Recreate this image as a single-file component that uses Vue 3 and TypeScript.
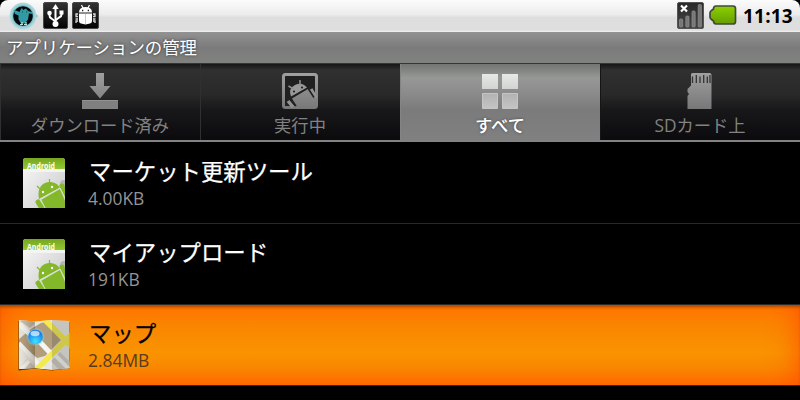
<template>
  <div class="screen">
    <header class="status-bar">
      <svg class="status-icon" width="30" height="28" viewBox="0 0 30 28">
        <defs>
          <radialGradient id="ring"><stop offset=".6" stop-color="#4298a1" /><stop offset=".85" stop-color="#9ed3da" /><stop offset="1" stop-color="#bdd9dc" /></radialGradient>
        </defs>
        <path d="M24 9l5 5-5 5z" fill="#72bdc7" />
        <circle cx="14" cy="14" r="13.5" fill="url(#ring)" />
        <circle cx="14" cy="14" r="9.8" fill="#02080a" />
        <path d="M4.500 8l4 1 2 1 1.500-3 1-1 1 2 3-1.500 2 2.500 4 1 1 2-4-.5-1 6-3 4h-4l-2.500-4v-4L6 12z" fill="#319aa5" />
        <path d="M13 10h1M17 10h1" stroke="#123f46" fill="none" />
        <path d="M11 22.500h3M15 22.500h3M13 20v2M17 20v2" stroke="#c8e0dc" stroke-width="1.200" />
      </svg>
      <svg class="status-icon" width="25" height="27" viewBox="0 0 25 27">
        <rect x=".5" y=".5" width="24" height="26" rx="1.5" fill="url(#dark)" stroke="#484848" />
        <g stroke="#fff" stroke-width="2" fill="none">
          <path d="M12.5 6v17" />
          <path d="M6.500 10v3.500q0 2 2 3l4 3M18.500 9v3.500q0 2-2 2.700l-4 3" />
        </g>
        <path d="M12.5 2l3.2 5H9.3zM16.5 8.500h4v4h-4z" fill="#fff" />
        <circle cx="6.5" cy="11" r="2.3" fill="#fff" />
        <circle cx="12.5" cy="22" r="3" fill="#fff" />
      </svg>
      <svg class="status-icon" width="27" height="27" viewBox="0 0 27 27">
        <defs>
          <linearGradient id="dark" x2="0" y2="1"><stop stop-color="#333" /><stop offset="1" stop-color="#020202" /></linearGradient>
        </defs>
        <rect x=".5" y=".5" width="26" height="26" rx="1.5" fill="url(#dark)" stroke="#484848" />
        <path d="M7 10.500q0-5.500 6.500-5.500T20 10.500z" fill="#fff" />
        <path d="M9.500 3l1.500 3M17.500 3L16 6" stroke="#fff" stroke-width="1.200" />
        <path d="M7 11.500h13V19q0 2-2 2.500l-4.500 1-4.500-1Q7 21 7 19z" fill="#fff" />
        <path d="M13.500 12v10" stroke="#bbb" stroke-width=".8" />
        <path d="M6 12H4v2.500h2M3.500 17H6M4 21v-2h2M21 12h2v2.500h-2M23.500 17H21M23 21v-2h-2" stroke="#ddd" stroke-width="1.300" fill="none" />
        <path d="M10 8.500h1.300M15.700 8.500H17" stroke="#222" stroke-width="1.300" />
      </svg>
      <div class="spacer"></div>
      <svg width="27" height="27" viewBox="0 0 27 27">
        <defs>
          <linearGradient id="dark2" x2="0" y2="1"><stop stop-color="#292929" /><stop offset="1" stop-color="#444" /></linearGradient>
        </defs>
        <rect x=".5" y=".5" width="26" height="26" rx="1.5" fill="url(#dark2)" stroke="#555" />
        <g fill="#777" stroke="#919191" stroke-width=".7">
          <rect x="2.5" y="17" width="3.2" height="8" rx="1" />
          <rect x="8.8" y="14" width="3.2" height="11" rx="1" />
          <rect x="15" y="9" width="3.2" height="16" rx="1" />
          <rect x="21.2" y="2.5" width="3.2" height="22.5" rx="1" />
        </g>
        <path d="M4 3.500l6 6M10 3.500l-6 6" stroke="#fff" stroke-width="2.2" />
      </svg>
      <svg class="battery" width="28" height="21" viewBox="0 0 28 21">
        <defs>
          <linearGradient id="bat" x2="0" y2="1"><stop stop-color="#8ed000" /><stop offset="1" stop-color="#669d00" /></linearGradient>
        </defs>
        <path d="M7 1h17q2.500 0 2.500 2.500v13q0 2.500-2.500 2.500H7q-2.500 0-2.500-3l-2-1.500Q1 13.500 1 12V8q0-1.500 1.500-2.500l2-1.500Q4.500 1 7 1z" fill="url(#bat)" stroke="#414839" stroke-width="1.700" />
      </svg>
      <span class="clock">11:13</span>
    </header>

    <div class="title-bar">アプリケーションの管理</div>

    <nav class="tabs">
      <div v-for="tab in tabs" :key="tab.id" class="tab" :class="{ active: tab.id === current }">
        <svg class="tab-icon" width="36" height="36" viewBox="0 0 36 36">
          <defs>
            <linearGradient id="gray" gradientUnits="userSpaceOnUse" x1="0" y1="0" x2="0" y2="36"><stop stop-color="#a0a0a0" /><stop offset="1" stop-color="#777" /></linearGradient>
            <linearGradient id="light" x2="0" y2="1"><stop stop-color="#e7e9e7" /><stop offset="1" stop-color="#d2d4d2" /></linearGradient>
            <linearGradient id="mid" x2="0" y2="1"><stop stop-color="#b2b2b2" /><stop offset="1" stop-color="#c4c4c4" /></linearGradient>
          </defs>
          <template v-if="tab.id === 'download'">
            <path d="M14 0h8v13h6.500L18 25.500 7.500 13H14z" fill="url(#gray)" />
            <path d="M0 27h36v9H0z" fill="#808080" />
            <path d="M0 27.500h36" stroke="#929292" />
          </template>
          <template v-else-if="tab.id === 'running'">
            <rect x="1.500" y="1.500" width="33" height="33" rx="2" fill="#202020" stroke="url(#gray)" stroke-width="3" />
            <path d="M9 23.500Q6 15.500 13 12T25 14.500z" fill="#999" />
            <path d="M6.500 13l5 3M18 7v6" stroke="#929292" stroke-width="1.500" />
            <path d="M10 25.500L26 16l7 10v8H14z" fill="url(#gray)" />
            <path d="M29 16l5 9M6 28l5 6" stroke="#919191" stroke-width="3.500" />
            <path d="M26.500 16l5.500 8.500M9 26l5 7" stroke="#222" stroke-width="1.600" />
            <circle cx="12" cy="18.500" r="1.100" fill="#222" /><circle cx="20" cy="14.500" r="1.100" fill="#222" />
          </template>
          <template v-else-if="tab.id === 'all'">
            <path d="M0 1h16v15H0zM20 1h16v15H20z" fill="url(#light)" />
            <path d="M.5 20.500h15v15H.5zM20.500 20.500h15v15h-15z" fill="url(#mid)" stroke="#c5c5c5" />
          </template>
          <template v-else>
            <path d="M9 1.500Q9 0 10.500 0h17Q29.500 0 29.500 2v34h-24V23l1.500-2-1.500-2v-3L9 12.500z" fill="url(#gray)" />
            <path d="M10.500 3.500V10M14.300 2v8M18 3.500V10M21.700 2v8M25.300 3.500V10M28 2v8" stroke="#333" stroke-width="1.300" />
          </template>
        </svg>
        <span class="tab-label">{{ tab.label }}</span>
      </div>
    </nav>

    <div class="list">
      <div v-for="app in apps" :key="app.name" class="row" :class="{ selected: app.icon === 'map' }">
        <svg v-if="app.icon === 'android'" class="app-icon" width="54" height="54" viewBox="0 0 54 54">
          <defs>
            <linearGradient id="paper" x2="1" y2="1"><stop stop-color="#fafafa" /><stop offset="1" stop-color="#c8c8c8" /></linearGradient>
            <linearGradient id="cap" x2="0" y2="1"><stop stop-color="#76a51f" /><stop offset="1" stop-color="#91c833" /></linearGradient>
            <clipPath id="sheet"><path d="M6 5q0-3 3-3h36q3 0 3 3v47H6z" /></clipPath>
          </defs>
          <g clip-path="url(#sheet)">
            <path d="M6 2h42v50H6z" fill="url(#paper)" />
            <path d="M6 2h42v11H6z" fill="url(#cap)" />
            <text x="10" y="13" class="icon-text" textLength="28" lengthAdjust="spacingAndGlyphs">Android</text>
            <path d="M6 13h42v3H6z" fill="#f4f4f4" />
            <circle cx="47" cy="28" r="4" fill="#b5b5b5" />
            <path d="M22 43C18 24 38 22 43 32z" fill="#84b82b" />
            <path d="M20 30l5 5M32.500 23v6" stroke="#84b82b" stroke-width="1.200" />
            <path d="M24 44l19-11 8 19H27z" fill="#84b82b" />
            <path d="M21 46l5 8M45 30l7 15" stroke="#84b82b" stroke-width="5" stroke-linecap="round" />
            <path d="M23 43l20-11 5 10M24 44l4 8" stroke="#dce3d0" stroke-width="1" fill="none" />
            <circle cx="26" cy="36" r="1.200" fill="#fff" /><circle cx="35" cy="31" r="1.200" fill="#fff" />
          </g>
        </svg>
        <svg v-else class="app-icon" width="54" height="54" viewBox="0 0 54 54">
          <defs>
            <clipPath id="fold"><path d="M2 2l16 1.500L35 2l17.500 1v47L35 52l-17-2-16 1z" /></clipPath>
            <radialGradient id="pin" cx=".5" cy=".8" r=".7"><stop stop-color="#3fe4ff" /><stop offset="1" stop-color="#1675e8" /></radialGradient>
            <radialGradient id="halo"><stop offset=".5" stop-color="#79dfff" /><stop offset="1" stop-color="#79dfff" stop-opacity="0" /></radialGradient>
            <linearGradient id="shade"><stop stop-color="#fff" stop-opacity=".15" /><stop offset="1" stop-color="#4a3a20" stop-opacity=".3" /></linearGradient>
          </defs>
          <path d="M1.500 3l16.500 2 17-2 18 1v46l-18 2.500-17-2L1.500 52.500z" fill="#5d3508" />
          <g clip-path="url(#fold)">
            <path d="M0 0h54v54H0z" fill="#e4e2dc" />
            <path d="M3 3l7-3 8 5-5 5z" fill="#bfb5a2" />
            <path d="M2 21l12-10 10-6 4-1L44 22 28 38 20 40 2 24z" fill="#a8906a" />
            <path d="M43 22l4-3-12-14-7-2z" fill="#b7a17a" />
            <path d="M0 54l10-13 8 8-3 5zM34 43l9-9 11 11v9H44z" fill="#c9c4b8" />
            <path d="M2 25l24 26M36 35l18 18M2 54l10-11" stroke="#f2f2ee" stroke-width="4" />
            <path d="M2 6l14 13M22 23l15 16" stroke="#f4f4f0" stroke-width="5" />
            <path d="M26 0l29 29M18 53l37-37" stroke="#f2e73a" stroke-width="5.500" />
            <path d="M1 0h17v54H1z" fill="url(#shade)" />
            <path d="M18 0h17v54H18z" fill="#fff" opacity=".12" />
            <path d="M35 0h18v54H35z" fill="#777" opacity=".28" />
          </g>
          <circle cx="18.500" cy="19" r="9.500" fill="url(#halo)" />
          <circle cx="18.500" cy="19" r="7.300" fill="url(#pin)" />
          <ellipse cx="18" cy="15.500" rx="4.500" ry="2.700" fill="#e0f4ff" opacity=".75" />
        </svg>
        <div class="info">
          <div class="name">{{ app.name }}</div>
          <div class="size">{{ app.size }}</div>
        </div>
      </div>
    </div>
  </div>
</template>

<script lang="ts" setup>
import { ref } from "vue";

interface Tab {
  id: string
  label: string
}

interface App {
  name: string
  size: string
  icon: string
}

const current = ref("all")

const tabs: Tab[] = [
  { id: "download", label: "ダウンロード済み" },
  { id: "running", label: "実行中" },
  { id: "all", label: "すべて" },
  { id: "sd", label: "SDカード上" },
]

const apps: App[] = [
  { name: "マーケット更新ツール", size: "4.00KB", icon: "android" },
  { name: "マイアップロード", size: "191KB", icon: "android" },
  { name: "マップ", size: "2.84MB", icon: "map" },
]
</script>

<style>
body {
  background: #000;
}
</style>

<style scoped>
.screen {
  width: 800px;
  height: 400px;
  overflow: hidden;
  background: #000;
  font-family: "Open Sans", "Noto Sans CJK JP", sans-serif;
}
.status-bar {
  display: flex;
  align-items: flex-start;
  box-sizing: border-box;
  height: 32px;
  padding: 2px 7px 0 9px;
  border-radius: 8px 8px 0 0;
  background: linear-gradient(#fbfbfb, #ececec 45%, #dedede 55%, #dedede 94%, #f4f4f4);
}
.status-icon {
  margin-right: 4px;
}
.battery {
  margin: 3px 0 0 5px;
}
.spacer {
  flex: 1;
}
.clock {
  width: 50px;
  margin-left: 6px;
  color: #000;
  font-size: 19px;
  font-weight: 700;
  line-height: 28px;
  letter-spacing: 0.2px;
  white-space: nowrap;
}
.title-bar {
  height: 31px;
  padding-left: 6px;
  background: linear-gradient(#929292, #7b7b7b 50%, #808280);
  color: #fff;
  font-size: 17.4px;
  line-height: 30px;
  text-shadow: 0 0 3px #333;
}
.tabs {
  display: flex;
  height: 76px;
  border-top: 1px solid #353535;
  border-bottom: 2px solid #828282;
}
.tab {
  display: flex;
  flex: 1;
  flex-direction: column;
  align-items: center;
  box-sizing: border-box;
  padding: 9px 1px 0 0;
  border-left: 1px solid #303030;
  background: linear-gradient(#161616, #303030 8%, #292929 40%, #181719 60%, #0b0a0c);
  color: #828282;
}
.tab.active {
  border-color: #848484;
  background: linear-gradient(#737573, #969896 18%, #8a8a8a 40%, #7b7b7b 60%, #808080);
  color: #fff;
}
.tab.active + .tab {
  border-color: #151515;
}
.tab.active .tab-label {
  text-shadow: 0 0 3px #444;
  font-weight: 500;
}
.tab-icon {
  flex: none;
}
.tab-label {
  margin-top: 4px;
  font-size: 17.3px;
  line-height: 26px;
  white-space: nowrap;
}
.list {
  padding-top: 1px;
}
.row {
  display: flex;
  box-sizing: border-box;
  height: 81px;
  padding: 13px 0 0 17px;
  border-bottom: 1px solid #292929;
  color: #fff;
}
.app-icon {
  flex: none;
}
.info {
  margin-left: 17px;
}
.name {
  height: 28px;
  margin: 2px 0 0 1px;
  font-size: 22.4px;
  line-height: 28px;
  -webkit-text-stroke: 0.25px currentColor;
}
.size {
  width: 100px;
  height: 24px;
  color: #949494;
  font-size: 18.5px;
  line-height: 24px;
  transform: scaleX(0.94);
  transform-origin: left;
}
.selected {
  background: linear-gradient(#ff7600, #f98a00 35%, #fa9300 60%, #f98700 78%, #ff6c00);
  box-shadow: inset 0 3px 3px -1px #a84900, inset 22px 0 30px -22px #ff5000, inset -22px 0 30px -22px #ff5000;
}
.selected .name {
  color: #000;
}
.selected .size {
  color: #573c20;
}
.icon-text {
  fill: #fff;
  font: 700 8px "Open Sans", sans-serif;
}
</style>
